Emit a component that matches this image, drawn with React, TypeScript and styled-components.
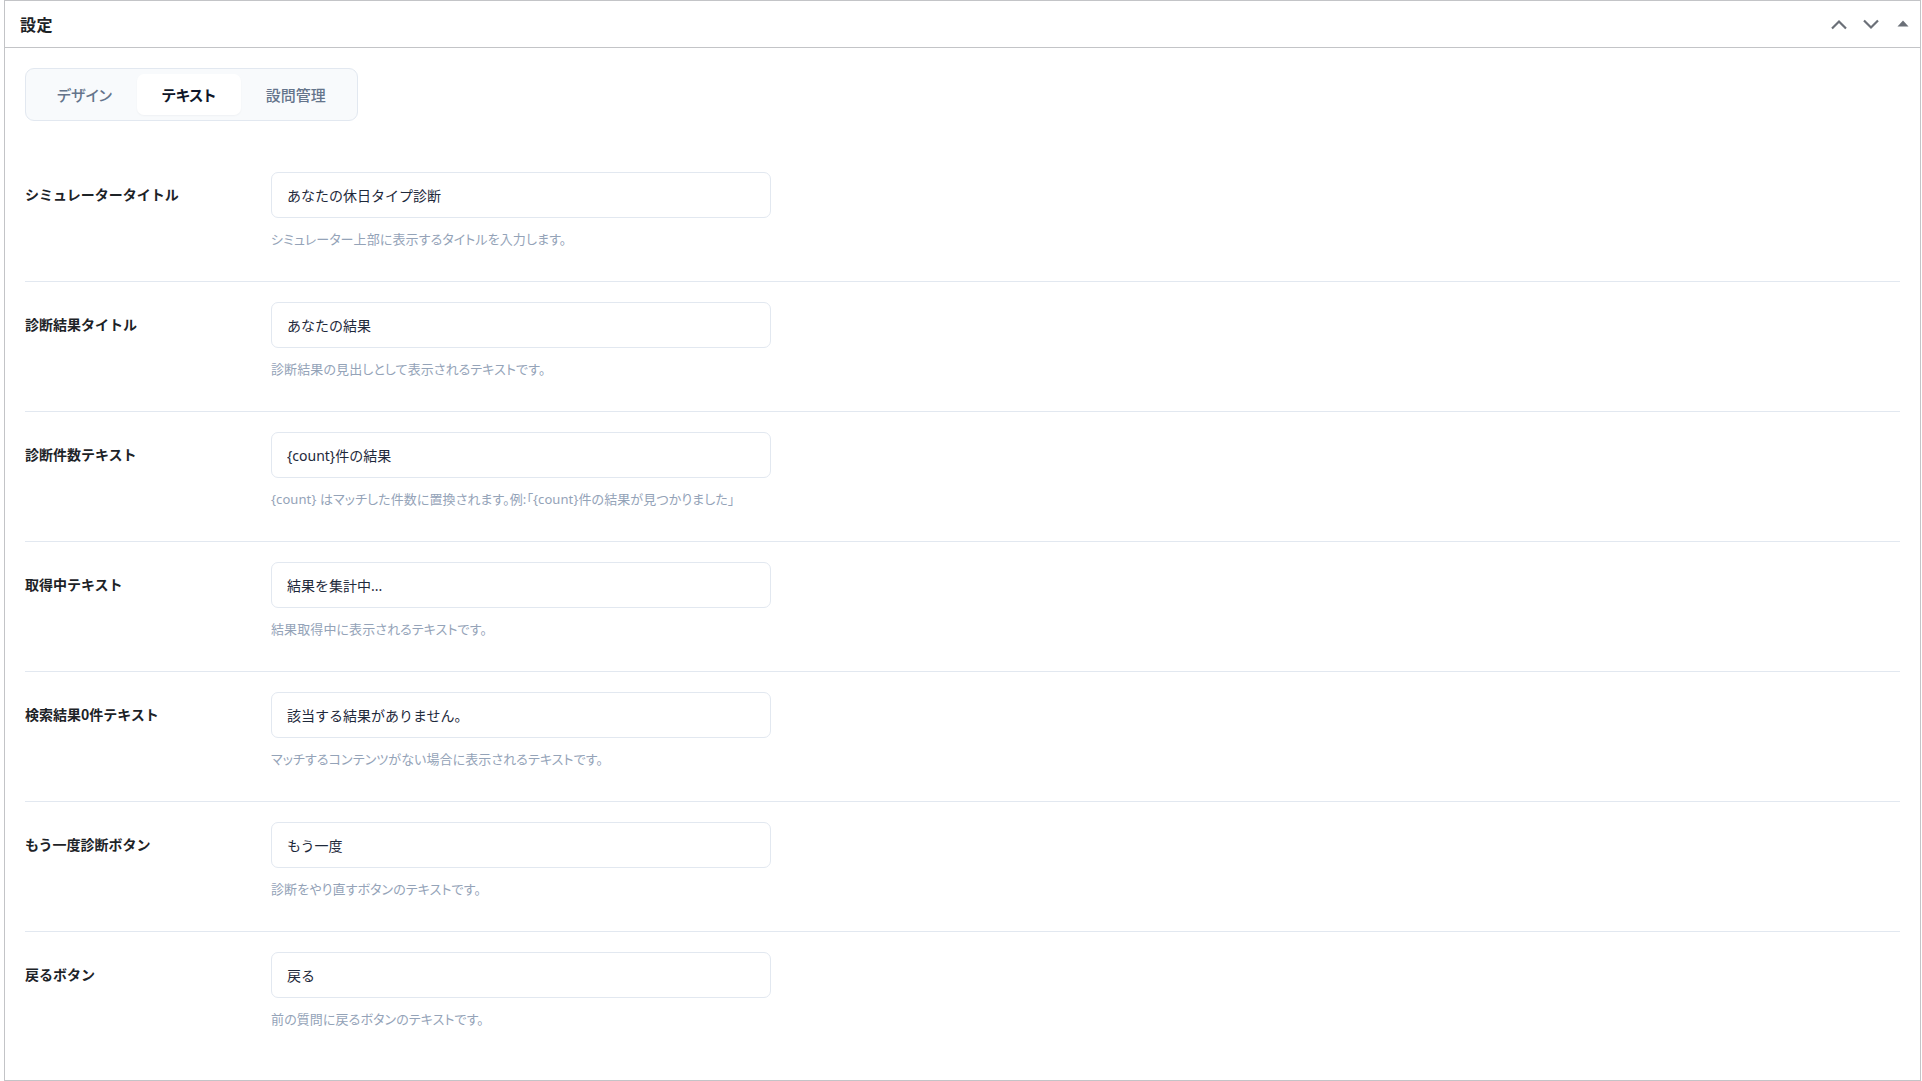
import React from "react";
import styled, { createGlobalStyle } from "styled-components";

const GlobalStyle = createGlobalStyle`
  html, body { margin: 0; padding: 0; background: #ffffff; }
  body {
    font-family: "Noto Sans CJK JP", "Noto Sans", sans-serif;
    color: #1d2327;
  }
  * { box-sizing: border-box; }
`;

const Page = styled.div`
  padding: 0 1px 0 4px;
  min-height: 1081px;
  display: flex;
`;

const Postbox = styled.section`
  flex: 1;
  border: 1px solid #c3c4c7;
  background: #ffffff;
  display: flex;
  flex-direction: column;
`;

const Header = styled.header`
  height: 47px;
  border-bottom: 1px solid #c3c4c7;
  display: flex;
  align-items: center;
  justify-content: space-between;
  padding: 0 8px 0 15px;
`;

const Title = styled.h2`
  margin: 0;
  font-size: 16px;
  font-weight: 700;
  color: #1d2327;
  line-height: 1;
  letter-spacing: 0.5px;
`;

const HeaderActions = styled.div`
  display: flex;
  align-items: center;
  gap: 14px;
  color: #6b7078;
`;

const IconButton = styled.span`
  display: inline-flex;
  align-items: center;
  justify-content: center;
  width: 18px;
  height: 18px;
`;

const Content = styled.div`
  padding: 20px 20px 0;
`;

const Tabs = styled.div`
  display: inline-flex;
  padding: 5px 6px;
  background: #f8fafc;
  border: 1px solid #e2e8f0;
  border-radius: 9px;
  margin-bottom: 31px;
`;

const Tab = styled.button<{ $active?: boolean }>`
  border: none;
  background: ${(p) => (p.$active ? "#ffffff" : "transparent")};
  color: ${(p) => (p.$active ? "#0f172a" : "#64748b")};
  font-family: "Noto Sans CJK JP", "Noto Sans", sans-serif;
  font-feature-settings: "palt";
  font-size: 15px;
  font-weight: ${(p) => (p.$active ? 600 : 500)};
  height: 41px;
  padding: 0 25px;
  border-radius: 7px;
  box-shadow: ${(p) => (p.$active ? "0 1px 2px rgba(15,23,42,0.04)" : "none")};
  cursor: pointer;
`;

const Row = styled.div<{ $last?: boolean }>`
  display: grid;
  grid-template-columns: 246px 500px;
  padding: 20px 0 ${(p) => (p.$last ? 20 : 33)}px;
  border-bottom: ${(p) => (p.$last ? "none" : "1px solid #e2e8f0")};
`;

const Label = styled.label`
  font-size: 14px;
  font-weight: 700;
  color: #1d2327;
  line-height: 44px;
`;

const Field = styled.div`
  display: flex;
  flex-direction: column;
`;

const Input = styled.input`
  height: 46px;
  width: 500px;
  border: 1px solid #e2e8f0;
  border-radius: 7px;
  padding: 0 15px;
  font-family: "Noto Sans", "Noto Sans CJK JP", sans-serif;
  font-size: 14px;
  color: #1e293b;
  background: #ffffff;
  outline: none;
`;

const Hint = styled.p`
  margin: 12px 0 0;
  font-family: "Noto Sans", "Noto Sans CJK JP", sans-serif;
  font-feature-settings: "palt";
  font-size: 13px;
  line-height: 18px;
  letter-spacing: 0.1px;
  color: #94a3b8;
`;

const rows = [
  {
    label: "シミュレータータイトル",
    value: "あなたの休日タイプ診断",
    hint: "シミュレーター上部に表示するタイトルを入力します。",
  },
  {
    label: "診断結果タイトル",
    value: "あなたの結果",
    hint: "診断結果の見出しとして表示されるテキストです。",
  },
  {
    label: "診断件数テキスト",
    value: "{count}件の結果",
    hint: "{count} はマッチした件数に置換されます。例:「{count}件の結果が見つかりました」",
  },
  {
    label: "取得中テキスト",
    value: "結果を集計中...",
    hint: "結果取得中に表示されるテキストです。",
  },
  {
    label: "検索結果0件テキスト",
    value: "該当する結果がありません。",
    hint: "マッチするコンテンツがない場合に表示されるテキストです。",
  },
  {
    label: "もう一度診断ボタン",
    value: "もう一度",
    hint: "診断をやり直すボタンのテキストです。",
  },
  {
    label: "戻るボタン",
    value: "戻る",
    hint: "前の質問に戻るボタンのテキストです。",
  },
];

export default function App() {
  return (
    <>
      <GlobalStyle />
      <Page>
        <Postbox>
          <Header>
            <Title>設定</Title>
            <HeaderActions>
              <IconButton aria-label="上へ移動">
                <svg width="18" height="18" viewBox="0 0 18 18">
                  <polyline points="2,13.5 9,6.5 16,13.5" fill="none" stroke="currentColor" strokeWidth="2.2" />
                </svg>
              </IconButton>
              <IconButton aria-label="下へ移動">
                <svg width="18" height="18" viewBox="0 0 18 18">
                  <polyline points="2,5.5 9,12.5 16,5.5" fill="none" stroke="currentColor" strokeWidth="2.2" />
                </svg>
              </IconButton>
              <IconButton aria-label="パネルを閉じる">
                <svg width="12" height="12" viewBox="0 0 12 12">
                  <polygon points="0.5,8.5 6,2.5 11.5,8.5" fill="currentColor" />
                </svg>
              </IconButton>
            </HeaderActions>
          </Header>
          <Content>
            <Tabs>
              <Tab>デザイン</Tab>
              <Tab $active>テキスト</Tab>
              <Tab>設問管理</Tab>
            </Tabs>
            {rows.map((r, i) => (
              <Row key={r.label} $last={i === rows.length - 1}>
                <Label>{r.label}</Label>
                <Field>
                  <Input defaultValue={r.value} />
                  <Hint>{r.hint}</Hint>
                </Field>
              </Row>
            ))}
          </Content>
        </Postbox>
      </Page>
    </>
  );
}
